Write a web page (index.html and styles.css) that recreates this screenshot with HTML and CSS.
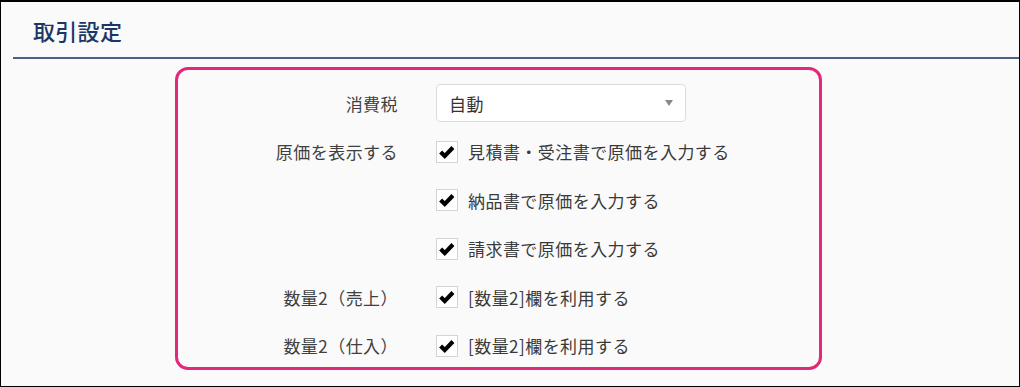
FILE: index.html
```html
<!DOCTYPE html>
<html lang="ja">
<head>
    <meta charset="UTF-8">
    <meta name="viewport" content="width=device-width, initial-scale=1.0">
    <title>取引設定</title>
    <link rel="stylesheet" href="styles.css">
</head>
<body>
    <div class="frame">
        <div class="header">
            <h2 class="title">取引設定</h2>
        </div>

        <div class="panel">
            <div class="label">消費税</div>
            <div class="control">
                <div class="select">
                    <span>自動</span>
                    <span class="arrow"></span>
                </div>
            </div>

            <div class="label">原価を表示する</div>
            <label class="control check">
                <span class="box"><svg viewBox="0 0 22 22"><path d="M4 11 L8.5 15.5 L17.5 6"/></svg></span>
                見積書・受注書で原価を入力する
            </label>

            <div class="label"></div>
            <label class="control check">
                <span class="box"><svg viewBox="0 0 22 22"><path d="M4 11 L8.5 15.5 L17.5 6"/></svg></span>
                納品書で原価を入力する
            </label>

            <div class="label"></div>
            <label class="control check">
                <span class="box"><svg viewBox="0 0 22 22"><path d="M4 11 L8.5 15.5 L17.5 6"/></svg></span>
                請求書で原価を入力する
            </label>

            <div class="label">数量2（売上）</div>
            <label class="control check">
                <span class="box"><svg viewBox="0 0 22 22"><path d="M4 11 L8.5 15.5 L17.5 6"/></svg></span>
                [数量2]欄を利用する
            </label>

            <div class="label">数量2（仕入）</div>
            <label class="control check">
                <span class="box"><svg viewBox="0 0 22 22"><path d="M4 11 L8.5 15.5 L17.5 6"/></svg></span>
                [数量2]欄を利用する
            </label>
        </div>
    </div>
</body>
</html>
```

FILE: styles.css
```css
* {
    margin: 0;
    padding: 0;
    box-sizing: border-box;
    font-family: "Noto Sans CJK JP", "Noto Sans", sans-serif;
}

body {
    background: #fafafa;
    color: #3a3a3a;
}

.frame {
    width: 1020px;
    height: 387px;
    border: 1px solid #000;
    border-top-width: 2px;
    background: #fafafa;
}

.header {
    margin-left: 12px;
    height: 57px;
    border-bottom: 2px solid #4d6283;
    padding-left: 20px;
    display: flex;
    align-items: center;
}

.title {
    font-size: 22px;
    font-weight: 500;
    color: #1c3765;
    letter-spacing: 0.3px;
}

.panel {
    margin: 8px 0 0 174px;
    width: 647px;
    height: 303px;
    border: 3px solid #e3287a;
    border-radius: 13px;
    padding-top: 14px;
    display: grid;
    grid-template-columns: 220px 1fr;
    grid-auto-rows: 38px;
    column-gap: 38px;
    row-gap: 10.6px;
    font-size: 17px;
    letter-spacing: 0.45px;
}

.label {
    display: flex;
    align-items: center;
    justify-content: flex-end;
    color: #404040;
}

.control {
    display: flex;
    align-items: center;
}

.select {
    width: 250px;
    height: 38px;
    background: #fff;
    border: 1px solid #dcdcdc;
    border-radius: 4px;
    padding: 0 12px;
    display: flex;
    align-items: center;
    justify-content: space-between;
    color: #333;
}

.arrow {
    width: 0;
    height: 0;
    border-left: 4.5px solid transparent;
    border-right: 4.5px solid transparent;
    border-top: 6px solid #8a8a8a;
}

.check {
    gap: 10px;
    color: #3a3a3a;
}

.box {
    width: 22px;
    height: 22px;
    background: #fff;
    border: 1px solid #d4d4d4;
    display: flex;
}

.box svg {
    width: 20px;
    height: 20px;
}

.box path {
    fill: none;
    stroke: #000;
    stroke-width: 4.6;
    stroke-linejoin: miter;
}
```
